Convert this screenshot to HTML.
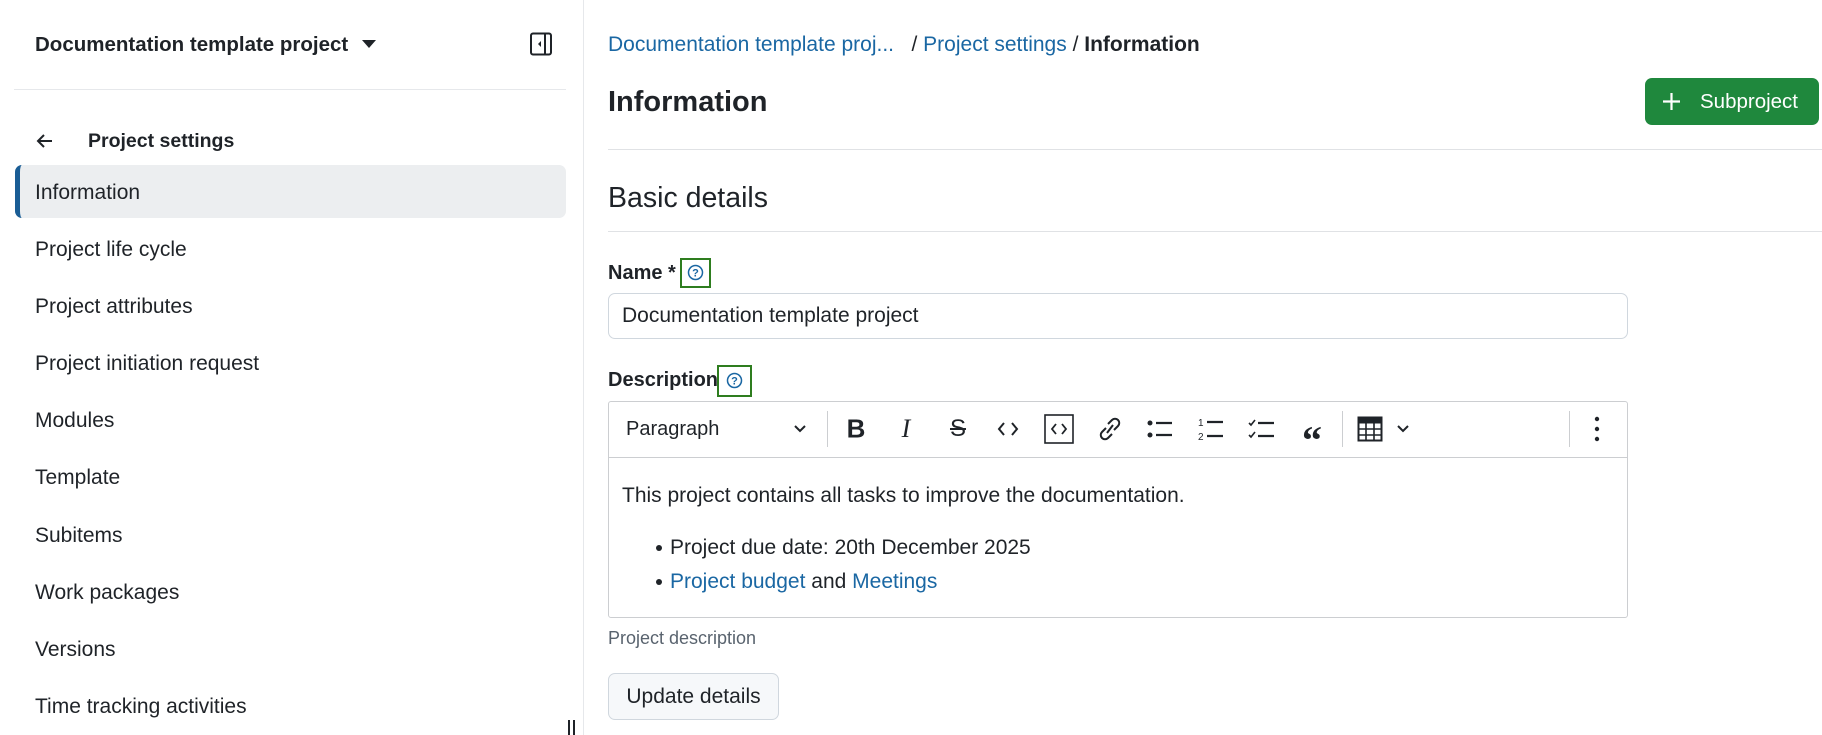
<!DOCTYPE html>
<html><head><meta charset="utf-8"><style>
*{box-sizing:border-box;margin:0;padding:0}
body{width:1822px;height:735px;overflow:hidden;background:#fff;font-family:"Liberation Sans",sans-serif;color:#1f2328;position:relative}
.a{position:absolute;white-space:nowrap}
.mi{position:absolute;left:35px;font-size:21px;transform:translateY(-50%)}
.tb{position:absolute;top:429px;transform:translate(-50%,-50%)}
a{color:#1a67a3;text-decoration:none}
</style></head><body>
<div class="a" style="left:583px;top:0;width:1px;height:735px;background:#e6e8eb"></div>
<div class="a" style="left:35px;top:33px;font-size:20.5px;font-weight:bold">Documentation template project</div>
<svg class="a" style="left:361px;top:39px" width="16" height="10"><path d="M1 1h14L8 9z" fill="#1f2328"/></svg>
<svg class="a" style="left:529px;top:32px" width="24" height="24" viewBox="0 0 24 24"><rect x="2" y="1.5" width="20" height="21" rx="2" fill="none" stroke="#1f2328" stroke-width="2"/><line x1="16" y1="2" x2="16" y2="22" stroke="#1f2328" stroke-width="2"/><path d="M12 9l-3 3 3 3z" fill="#1f2328"/></svg>
<div class="a" style="left:14px;top:89px;width:552px;height:1px;background:#e6e8eb"></div>
<svg class="a" style="left:36px;top:132px" width="18" height="18" viewBox="0 0 18 18"><path d="M16 9H3M8 3L2 9l6 6" fill="none" stroke="#1f2328" stroke-width="2"/></svg>
<div class="a" style="left:88px;top:130px;font-size:19.5px;font-weight:bold">Project settings</div>
<div class="a" style="left:15px;top:165px;width:551px;height:53px;background:#eceef0;border-radius:7px;border-left:5px solid #1a5d95"></div>
<div class="mi" style="top:193px">Information</div>
<div class="mi" style="top:250px">Project life cycle</div>
<div class="mi" style="top:307px">Project attributes</div>
<div class="mi" style="top:364px">Project initiation request</div>
<div class="mi" style="top:421px">Modules</div>
<div class="mi" style="top:478px">Template</div>
<div class="mi" style="top:536px">Subitems</div>
<div class="mi" style="top:593px">Work packages</div>
<div class="mi" style="top:650px">Versions</div>
<div class="mi" style="top:707px">Time tracking activities</div>
<div class="a" style="left:568px;top:720px;width:2px;height:15px;background:#1f2328"></div>
<div class="a" style="left:573px;top:720px;width:2px;height:15px;background:#1f2328"></div>
<div class="a" style="left:608px;top:33px;font-size:21px"><a>Documentation template proj...</a>&nbsp;&nbsp; / <a>Project settings</a> / <b>Information</b></div>
<div class="a" style="left:608px;top:86px;font-size:29px;font-weight:bold">Information</div>
<div class="a" style="left:1645px;top:78px;width:174px;height:47px;background:#1f883d;border-radius:7px;color:#fff;font-size:20.5px;line-height:47px;padding-left:55px">Subproject</div>
<svg class="a" style="left:1662px;top:92px" width="19" height="19"><path d="M9.5 1v17M1 9.5h17" stroke="#fff" stroke-width="2.2"/></svg>
<div class="a" style="left:608px;top:149px;width:1214px;height:1px;background:#e0e2e5"></div>
<div class="a" style="left:608px;top:182px;font-size:28.5px">Basic details</div>
<div class="a" style="left:608px;top:231px;width:1214px;height:1px;background:#e0e2e5"></div>
<div class="a" style="left:608px;top:262px;font-size:20px;font-weight:bold">Name *</div>
<div class="a" style="left:680px;top:258px;width:31px;height:30px;border:2px solid #2e7d1f"></div>
<svg class="a" style="left:687px;top:264px" width="17" height="17"><circle cx="8.5" cy="8.5" r="7" fill="none" stroke="#1a67a3" stroke-width="1.5"/><text x="8.5" y="12.5" font-size="11" font-weight="bold" text-anchor="middle" fill="#1a67a3" font-family="Liberation Sans">?</text></svg>
<div class="a" style="left:608px;top:293px;width:1020px;height:46px;border:1px solid #d0d7de;border-radius:7px;font-size:21px;padding:10px 0 0 13px">Documentation template project</div>
<div class="a" style="left:608px;top:369px;font-size:20px;font-weight:bold">Description</div>
<div class="a" style="left:717px;top:365px;width:35px;height:32px;border:2px solid #2e7d1f"></div>
<svg class="a" style="left:726px;top:372px" width="17" height="17"><circle cx="8.5" cy="8.5" r="7" fill="none" stroke="#1a67a3" stroke-width="1.5"/><text x="8.5" y="12.5" font-size="11" font-weight="bold" text-anchor="middle" fill="#1a67a3" font-family="Liberation Sans">?</text></svg>
<div class="a" style="left:608px;top:401px;width:1020px;height:217px;border:1px solid #ccced1;border-radius:3px"></div>
<div class="a" style="left:609px;top:457px;width:1018px;height:1px;background:#ccced1"></div>
<div class="a" style="left:626px;top:418px;font-size:20px">Paragraph</div>
<svg class="tb" style="left:800px" width="14" height="10"><path d="M2 2l5 5 5-5" fill="none" stroke="#1f2328" stroke-width="2"/></svg>
<div class="a" style="left:827px;top:411px;width:1px;height:36px;background:#ccced1"></div>
<div class="tb" style="left:856px;font-size:26px;font-weight:bold">B</div>
<div class="tb" style="left:906px;font-size:26px;font-style:italic;font-family:'Liberation Serif',serif">I</div>
<div class="tb" style="left:958px;font-size:24px;text-decoration:line-through">S</div>
<svg class="tb" style="left:1008px" width="22" height="16"><path d="M7 2L2 8l5 6M15 2l5 6-5 6" fill="none" stroke="#1f2328" stroke-width="2"/></svg>
<svg class="tb" style="left:1059px" width="30" height="30"><rect x="1" y="1" width="28" height="28" fill="none" stroke="#1f2328" stroke-width="1.6"/><path d="M12 10l-4 5 4 5M18 10l4 5-4 5" fill="none" stroke="#1f2328" stroke-width="1.8"/></svg>
<svg class="tb" style="left:1110px" width="24" height="26" viewBox="0 0 24 26"><path d="M10 8l4-4a4 4 0 016 6l-4 4M14 18l-4 4a4 4 0 01-6-6l4-4M9 17l6-8" fill="none" stroke="#1f2328" stroke-width="2"/></svg>
<svg class="tb" style="left:1160px" width="28" height="22"><circle cx="4" cy="5" r="2.5" fill="#1f2328"/><circle cx="4" cy="17" r="2.5" fill="#1f2328"/><path d="M10 5h16M10 17h16" stroke="#1f2328" stroke-width="2.2"/></svg>
<svg class="tb" style="left:1211px" width="28" height="26"><text x="1" y="10" font-size="10" font-family="Liberation Sans" fill="#1f2328">1</text><text x="1" y="24" font-size="10" font-family="Liberation Sans" fill="#1f2328">2</text><path d="M10 6h16M10 20h16" stroke="#1f2328" stroke-width="2.2"/></svg>
<svg class="tb" style="left:1262px" width="28" height="24"><path d="M1 6l2 2 4-5M1 18l2 2 4-5" fill="none" stroke="#1f2328" stroke-width="1.6"/><path d="M10 6h16M10 19h16" stroke="#1f2328" stroke-width="2.2"/></svg>
<div class="tb" style="left:1312px;font-size:40px;font-weight:bold;top:440px;font-family:'Liberation Serif',serif">“</div>
<div class="a" style="left:1342px;top:411px;width:1px;height:36px;background:#ccced1"></div>
<svg class="tb" style="left:1370px" width="26" height="26"><rect x="1.5" y="1.5" width="23" height="23" fill="none" stroke="#1f2328" stroke-width="2"/><rect x="1.5" y="1.5" width="23" height="6" fill="#1f2328"/><path d="M9 2v22M17 2v22M2 13h22M2 19h22" stroke="#1f2328" stroke-width="1.6"/></svg>
<svg class="tb" style="left:1403px" width="14" height="10"><path d="M2 2l5 5 5-5" fill="none" stroke="#1f2328" stroke-width="2"/></svg>
<div class="a" style="left:1569px;top:411px;width:1px;height:36px;background:#ccced1"></div>
<svg class="tb" style="left:1597px" width="6" height="26"><circle cx="3" cy="3" r="2.2" fill="#1f2328"/><circle cx="3" cy="13" r="2.2" fill="#1f2328"/><circle cx="3" cy="23" r="2.2" fill="#1f2328"/></svg>
<div class="a" style="left:622px;top:484px;font-size:21px">This project contains all tasks to improve the documentation.</div>
<div class="a" style="left:656px;top:545px;width:6px;height:6px;border-radius:50%;background:#1f2328"></div>
<div class="a" style="left:670px;top:536px;font-size:21px">Project due date: 20th December 2025</div>
<div class="a" style="left:656px;top:579px;width:6px;height:6px;border-radius:50%;background:#1f2328"></div>
<div class="a" style="left:670px;top:570px;font-size:21px"><a>Project budget</a> and <a>Meetings</a></div>
<div class="a" style="left:608px;top:628px;font-size:18px;color:#59636e">Project description</div>
<div class="a" style="left:608px;top:673px;width:171px;height:47px;background:#f6f8fa;border:1px solid #d0d7de;border-radius:7px;font-size:21px;line-height:45px;text-align:center">Update details</div>
</body></html>
